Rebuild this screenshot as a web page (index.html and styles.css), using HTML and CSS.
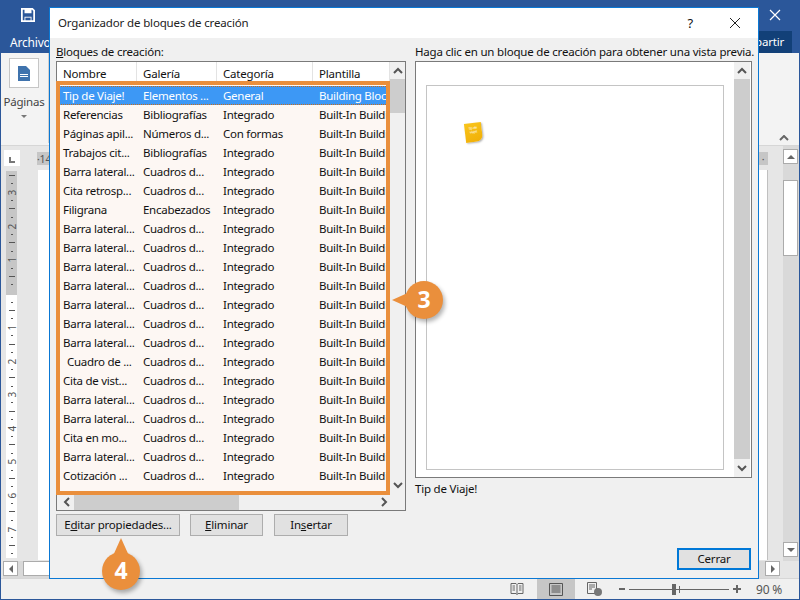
FILE: index.html
```html
<!DOCTYPE html>
<html lang="es">
<head>
    <meta charset="UTF-8">
    <title>Organizador de bloques de creación</title>
    <link rel="stylesheet" href="styles.css">
</head>
<body>
    <div class="word">
        <div class="titlebar">
            <svg class="save-icon" width="14" height="14" viewBox="0 0 16 16"><path d="M1 1h12l2 2v12H1z" fill="none" stroke="#fff" stroke-width="2"/><path d="M4 1h8v5H4zM4 10h8v5H4z" fill="#fff"/><path d="M5 11h6v3H5z" fill="#2b579a"/></svg>
            <svg class="word-close" width="12" height="12" viewBox="0 0 12 12"><path d="M1 1l10 10M11 1L1 11" stroke="#fff" stroke-width="1.2"/></svg>
        </div>
        <div class="tabs">
            <span class="tab-file">Archivo</span>
            <span class="tab-share">Compartir</span>
        </div>
        <div class="ribbon">
            <div class="pages-group">
                <div class="pages-btn">
                    <svg width="12" height="15" viewBox="0 0 12 15"><path d="M0 0h8l4 4v11H0z" fill="#3f73ad"/><path d="M2 8h8v1H2zM2 10h8v1H2z" fill="#fff"/></svg>
                </div>
                <span class="pages-label">Páginas</span>
                <span class="pages-arrow"></span>
            </div>
            <div class="ribbon-sep"></div>
            <svg class="ribbon-collapse" width="10" height="6" viewBox="0 0 10 6"><path d="M1 5l4-4 4 4" fill="none" stroke="#666" stroke-width="2"/></svg>
        </div>
        <div class="workspace">
            <div class="ruler-side">
                <div class="tab-corner"><span class="tab-l"></span></div>
                <div class="vruler">
                    <div class="vruler-gray">
                        <i class="dash"></i><i class="dot"></i><b>3</b><i class="dot"></i><i class="dash"></i><i class="dot"></i><b>2</b><i class="dot"></i><i class="dash"></i><i class="dot"></i><b>1</b><i class="dot"></i><i class="dash"></i><i class="dot"></i>
                    </div>
                    <div class="vruler-white">
                        <i class="dot"></i><i class="dash"></i><i class="dot"></i><b>1</b><i class="dot"></i><i class="dash"></i><i class="dot"></i><b>2</b><i class="dot"></i><i class="dash"></i><i class="dot"></i><b>3</b><i class="dot"></i><i class="dash"></i><i class="dot"></i><b>4</b><i class="dot"></i><i class="dash"></i><i class="dot"></i><b>5</b><i class="dot"></i><i class="dash"></i><i class="dot"></i><b>6</b><i class="dot"></i><i class="dash"></i><i class="dot"></i><b>7</b><i class="dot"></i><i class="dash"></i><i class="dot"></i>
                    </div>
                </div>
            </div>
            <div class="doc-area">
                <div class="hruler"><span class="hruler-num">·14</span><span class="hruler-end">·</span></div>
                <div class="page"></div>
            </div>
            <div class="vscroll-main">
                <span class="main-btn"><span class="tri-up"></span></span>
                <span class="main-thumb"></span>
                <span class="main-btn"><span class="tri-down"></span></span>
            </div>
        </div>
        <div class="hscroll-main">
            <span class="main-btn"><span class="tri-left"></span></span>
            <span class="main-hthumb"></span>
            <span class="main-btn"><span class="tri-right"></span></span>
        </div>
        <div class="statusbar">
            <svg class="view-icon" width="14" height="14" viewBox="0 0 14 14"><path d="M1 1.500h5l1 1 1-1h5v10H8l-1 1-1-1H1zM7 2.500v10M2.500 4H5M2.500 6H5M2.500 8H5M9 4h2.500M9 6h2.500M9 8h2.500" fill="none" stroke="#666"/></svg>
            <span class="view-active"><svg width="14" height="13" viewBox="0 0 14 13"><path d="M.5.5h13v12H.500zM2.500 3h9M2.500 5h9M2.500 7h9M2.500 9h9" fill="none" stroke="#555"/></svg></span>
            <svg class="view-icon web" width="16" height="14" viewBox="0 0 16 14"><path d="M.5.5h9v11h-9zM2 3h6M2 5h6M2 7h3" fill="none" stroke="#666"/><circle cx="11" cy="10" r="4" fill="#777"/></svg>
            <span class="zoom-minus"></span>
            <span class="zoom-track"><span class="zoom-mid"></span><span class="zoom-thumb"></span></span>
            <span class="zoom-plus"></span>
            <span class="zoom-text">90 %</span>
        </div>
    </div>

    <div class="dialog">
        <div class="dialog-title">
            <span class="dialog-name">Organizador de bloques de creación</span>
            <span class="dialog-help">?</span>
            <svg class="dialog-close" width="12" height="12" viewBox="0 0 12 12"><path d="M1 1l10 10M11 1L1 11" stroke="#222" stroke-width="1"/></svg>
        </div>
        <div class="dialog-body">
            <div class="panes">
                <div class="left-pane">
                    <div class="pane-label"><u>B</u>loques de creación:</div>
                    <div class="listbox">
                        <div class="list-main">
                            <div class="list-view">
                                <div class="list-head">
                                    <span>Nombre</span><span>Galería</span><span>Categoría</span><span>Plantilla</span>
                                </div>
                                <div class="list-rows">
                                    <div class="row selected"><span>Tip de Viaje!</span><span>Elementos ...</span><span>General</span><span>Building Blocks</span></div>
                                    <div class="row"><span>Referencias</span><span>Bibliografías</span><span>Integrado</span><span>Built-In Building</span></div>
                                    <div class="row"><span>Páginas apil...</span><span>Números d...</span><span>Con formas</span><span>Built-In Building</span></div>
                                    <div class="row"><span>Trabajos cit...</span><span>Bibliografías</span><span>Integrado</span><span>Built-In Building</span></div>
                                    <div class="row"><span>Barra lateral...</span><span>Cuadros d...</span><span>Integrado</span><span>Built-In Building</span></div>
                                    <div class="row"><span>Cita retrosp...</span><span>Cuadros d...</span><span>Integrado</span><span>Built-In Building</span></div>
                                    <div class="row"><span>Filigrana</span><span>Encabezados</span><span>Integrado</span><span>Built-In Building</span></div>
                                    <div class="row"><span>Barra lateral...</span><span>Cuadros d...</span><span>Integrado</span><span>Built-In Building</span></div>
                                    <div class="row"><span>Barra lateral...</span><span>Cuadros d...</span><span>Integrado</span><span>Built-In Building</span></div>
                                    <div class="row"><span>Barra lateral...</span><span>Cuadros d...</span><span>Integrado</span><span>Built-In Building</span></div>
                                    <div class="row"><span>Barra lateral...</span><span>Cuadros d...</span><span>Integrado</span><span>Built-In Building</span></div>
                                    <div class="row"><span>Barra lateral...</span><span>Cuadros d...</span><span>Integrado</span><span>Built-In Building</span></div>
                                    <div class="row"><span>Barra lateral...</span><span>Cuadros d...</span><span>Integrado</span><span>Built-In Building</span></div>
                                    <div class="row"><span>Barra lateral...</span><span>Cuadros d...</span><span>Integrado</span><span>Built-In Building</span></div>
                                    <div class="row"><span class="indented">Cuadro de ...</span><span>Cuadros d...</span><span>Integrado</span><span>Built-In Building</span></div>
                                    <div class="row"><span>Cita de vist...</span><span>Cuadros d...</span><span>Integrado</span><span>Built-In Building</span></div>
                                    <div class="row"><span>Barra lateral...</span><span>Cuadros d...</span><span>Integrado</span><span>Built-In Building</span></div>
                                    <div class="row"><span>Barra lateral...</span><span>Cuadros d...</span><span>Integrado</span><span>Built-In Building</span></div>
                                    <div class="row"><span>Cita en mo...</span><span>Cuadros d...</span><span>Integrado</span><span>Built-In Building</span></div>
                                    <div class="row"><span>Barra lateral...</span><span>Cuadros d...</span><span>Integrado</span><span>Built-In Building</span></div>
                                    <div class="row"><span>Cotización ...</span><span>Cuadros d...</span><span>Integrado</span><span>Built-In Building</span></div>
                                    <div class="row"><span>Citas en blo...</span><span>Cuadros d...</span><span>Integrado</span><span>Built-In Building</span></div>
                                </div>
                            </div>
                            <div class="scroll-v list-scroll">
                                <svg class="chev" width="10" height="7" viewBox="0 0 10 7"><path d="M1 6l4-4 4 4" fill="none" stroke="#555" stroke-width="2"/></svg>
                                <span class="thumb-v"></span>
                                <svg class="chev chev-end" width="10" height="7" viewBox="0 0 10 7"><path d="M1 1l4 4 4-4" fill="none" stroke="#555" stroke-width="2"/></svg>
                            </div>
                        </div>
                        <div class="scroll-h">
                            <svg width="7" height="10" viewBox="0 0 7 10"><path d="M6 1L2 5l4 4" fill="none" stroke="#555" stroke-width="2"/></svg>
                            <span class="thumb-h"></span>
                            <svg width="7" height="10" viewBox="0 0 7 10"><path d="M1 1l4 4-4 4" fill="none" stroke="#555" stroke-width="2"/></svg>
                        </div>
                        <div class="list-frame"></div>
                    </div>
                </div>
                <div class="right-pane">
                    <div class="pane-label">Haga clic en un bloque de creación para obtener una vista previa.</div>
                    <div class="preview">
                        <div class="preview-area">
                            <div class="preview-page">
                                <div class="note">tip de<br>viaje!</div>
                            </div>
                        </div>
                        <div class="scroll-v preview-scroll">
                            <svg class="chev" width="10" height="7" viewBox="0 0 10 7"><path d="M1 6l4-4 4 4" fill="none" stroke="#555" stroke-width="2"/></svg>
                            <span class="thumb-v"></span>
                            <svg class="chev chev-end" width="10" height="7" viewBox="0 0 10 7"><path d="M1 1l4 4 4-4" fill="none" stroke="#555" stroke-width="2"/></svg>
                        </div>
                    </div>
                    <div class="preview-name">Tip de Viaje!</div>
                </div>
            </div>
            <div class="actions">
                <button class="btn btn-edit">E<u>d</u>itar propiedades...</button>
                <button class="btn btn-delete"><u>E</u>liminar</button>
                <button class="btn btn-insert">In<u>s</u>ertar</button>
            </div>
            <div class="footer">
                <button class="btn btn-close">Cerrar</button>
            </div>
        </div>
    </div>

    <div class="callout callout-3">3</div>
    <div class="callout callout-4">4</div>
</body>
</html>
```

FILE: styles.css
```css
* {
    box-sizing: border-box;
}
html, body {
    margin: 0;
    height: 600px;
    overflow: hidden;
}
body {
    position: relative;
    width: 800px;
    font-family: "Noto Sans", "Open Sans", sans-serif;
    font-size: 11.5px;
    letter-spacing: -0.2px;
    color: #111;
    background: #f0f0f0;
}

/* word window behind the dialog */
.word {
    display: flex;
    flex-direction: column;
    width: 800px;
    height: 600px;
    border-left: 1px solid #2b579a;
    border-right: 1px solid #2b579a;
    border-bottom: 1px solid #2b579a;
}
.titlebar {
    display: flex;
    align-items: center;
    justify-content: space-between;
    height: 31px;
    padding: 0 18px 1px 20px;
    background: #2b579a;
}
.tabs {
    display: flex;
    align-items: center;
    justify-content: space-between;
    height: 22px;
    background: #2b579a;
    color: #fff;
}
.tab-file {
    margin-left: 9px;
    font-size: 12px;
}
.tab-share {
    width: 68px;
    height: 22px;
    line-height: 22px;
    margin-right: 7px;
    padding-right: 8px;
    text-align: right;
    background: #124078;
}
.ribbon {
    display: flex;
    height: 93px;
    background: #f3f3f3;
    border-bottom: 1px solid #d6d6d6;
}
.pages-group {
    display: flex;
    flex-direction: column;
    align-items: center;
    width: 46px;
    margin-right: 1px;
    padding-top: 5px;
}
.pages-btn {
    display: flex;
    align-items: center;
    justify-content: center;
    flex: none;
    width: 30px;
    height: 30px;
    background: #fff;
    border: 1px solid #c6c6c6;
}
.pages-label {
    margin-top: 6px;
    color: #444;
}
.pages-arrow {
    margin-top: 6px;
    border-left: 3px solid transparent;
    border-right: 3px solid transparent;
    border-top: 3px solid #777;
}
.ribbon-sep {
    width: 1px;
    height: 90px;
    background: #d0d0d0;
}
.ribbon-collapse {
    flex: none;
    margin: 82px 10px 0 auto;
}
.workspace {
    display: flex;
    flex: 1;
    background: #e6e6e6;
}
.ruler-side {
    width: 36px;
    padding: 4px 0 0 3px;
}
.tab-corner {
    display: flex;
    align-items: flex-end;
    justify-content: center;
    width: 16px;
    height: 16px;
    padding-bottom: 3px;
    background: #fff;
}
.tab-l {
    width: 6px;
    height: 6px;
    border-left: 2px solid #777;
    border-bottom: 2px solid #777;
}
.vruler {
    margin-top: 5px;
    width: 11px;
    margin-left: 2px;
}
.vruler-gray,
.vruler-white {
    display: flex;
    flex-direction: column;
    align-items: center;
    color: #555;
}
.vruler-gray {
    height: 124px;
    background: #c6c6c6;
}
.vruler-white {
    height: 263px;
    padding-top: 3px;
    background: #fff;
}
.vruler i,
.vruler b {
    display: flex;
    align-items: center;
    justify-content: center;
    height: 8.45px;
    font-weight: 400;
    font-size: 10px;
    font-style: normal;
}
.vruler b {
    writing-mode: vertical-rl;
    transform: rotate(180deg);
}
.dash::before {
    content: "";
    width: 6px;
    height: 1px;
    background: #555;
}
.dot::before {
    content: "";
    width: 2px;
    height: 1px;
    background: #555;
}
.doc-area {
    flex: 1;
    display: flex;
    flex-direction: column;
}
.hruler {
    display: flex;
    justify-content: space-between;
    height: 24px;
    padding: 6px 2px 0 0;
    font-size: 10.5px;
    line-height: 14px;
    color: #555;
}
.hruler-num {
    width: 12px;
    height: 13px;
    background: #c6c6c6;
    white-space: nowrap;
    overflow: hidden;
}
.hruler-end {
    width: 10px;
    height: 13px;
    background: #c6c6c6;
    text-align: center;
}
.page {
    width: 730px;
    height: 390px;
    margin-left: 1px;
    background: #fff;
    border-right: 1px solid #c0c0c0;
}
.vscroll-main {
    display: flex;
    flex-direction: column;
    width: 29px;
    padding: 3px 1px 4px 13px;
    background: linear-gradient(to right, #e6e6e6 13px, #d9d9d9 13px);
}
.main-btn {
    display: flex;
    align-items: center;
    justify-content: center;
    flex: none;
    width: 15px;
    height: 15px;
    background: #fff;
    border: 1px solid #ababab;
}
.main-thumb {
    flex: none;
    height: 76px;
    margin-top: 16px;
    margin-bottom: auto;
    background: #fff;
    border: 1px solid #ababab;
}
.tri-up, .tri-down {
    border-left: 4px solid transparent;
    border-right: 4px solid transparent;
}
.tri-up {
    border-bottom: 4px solid #666;
}
.tri-down {
    border-top: 4px solid #666;
}
.tri-left, .tri-right {
    border-top: 4px solid transparent;
    border-bottom: 4px solid transparent;
}
.tri-left {
    border-right: 4px solid #666;
}
.tri-right {
    border-left: 4px solid #666;
}
.hscroll-main {
    display: flex;
    align-items: flex-start;
    height: 17px;
    padding: 0 19px 0 2px;
    background: linear-gradient(to right, #e6e6e6 2px, #d9d9d9 2px, #d9d9d9 778px, #e6e6e6 778px);
    gap: 5px;
}
.main-hthumb {
    width: 30px;
    height: 15px;
    margin-right: auto;
    background: #fff;
    border: 1px solid #ababab;
}
.statusbar {
    display: flex;
    align-items: center;
    height: 21px;
    padding-left: 509px;
    background: #f0f0f0;
    border-top: 1px solid #d6d6d6;
    color: #555;
}
.view-active {
    display: flex;
    align-items: center;
    justify-content: center;
    width: 38px;
    height: 20px;
    margin-left: 13px;
    background: #c6c6c6;
}
.view-icon.web {
    margin-left: 12px;
}
.zoom-minus {
    width: 6px;
    height: 2px;
    margin-left: 16px;
    background: #666;
}
.zoom-track {
    display: block;
    position: relative;
    width: 100px;
    height: 1px;
    margin-left: 4px;
    background: #666;
}
.zoom-thumb {
    position: absolute;
    left: 43px;
    top: -5px;
    width: 4px;
    height: 11px;
    background: #666;
}
.zoom-mid {
    position: absolute;
    left: 50px;
    top: -3px;
    width: 1px;
    height: 7px;
    background: #666;
}
.zoom-plus {
    position: relative;
    width: 8px;
    height: 2px;
    margin-left: 4px;
    background: #666;
}
.zoom-plus::after {
    content: "";
    position: absolute;
    left: 3px;
    top: -3px;
    width: 2px;
    height: 8px;
    background: #666;
}
.zoom-text {
    margin-left: 15px;
    font-size: 12px;
}

/* dialog */
.dialog {
    position: absolute;
    left: 49px;
    top: 7px;
    width: 710px;
    height: 572px;
    display: flex;
    flex-direction: column;
    background: #f0f0f0;
    border: 1px solid #0a78d4;
}
.dialog-title {
    display: flex;
    align-items: center;
    flex: none;
    height: 30px;
    padding: 0 0 1px 8px;
    background: #fff;
    letter-spacing: -0.15px;
}
.dialog-name {
    flex: 1;
    color: #222;
}
.dialog-help {
    margin-right: 36px;
    font-size: 13px;
}
.dialog-close {
    margin-right: 17px;
}
.dialog-body {
    flex: 1;
    display: flex;
    flex-direction: column;
    padding: 6px 6px 8px 6px;
}
.panes {
    display: flex;
    gap: 9px;
}
.pane-label {
    height: 17px;
    line-height: 15px;
    white-space: nowrap;
}
.left-pane {
    width: 350px;
}
.right-pane {
    width: 337px;
}
.listbox {
    position: relative;
    height: 450px;
    display: flex;
    flex-direction: column;
    background: #fff;
    border: 1px solid #7a7a7a;
}
.list-main {
    display: flex;
    flex: 1;
    min-height: 0;
}
.list-view {
    width: 333px;
    overflow: hidden;
}
.list-head,
.row {
    display: grid;
    grid-template-columns: 80px 80px 96px 77px;
    white-space: nowrap;
}
.list-head {
    height: 20px;
    line-height: 23px;
    background: #fff;
}
.list-head span {
    padding-left: 6px;
    border-right: 1px solid #e3e3e3;
    overflow: hidden;
}
.list-rows {
    height: 412px;
    padding-top: 4px;
    overflow: hidden;
    background: #fdf7f3;
}
.row {
    height: 19px;
    line-height: 19px;
    letter-spacing: -0.27px;
}
.row span {
    padding-left: 6px;
    overflow: hidden;
}
.row .indented {
    padding-left: 10px;
}
.row.selected {
    background: #3d98f5;
    color: #fff;
    outline: 1px dotted #c96c1a;
    outline-offset: -1px;
}
.list-frame {
    position: absolute;
    left: -1px;
    top: 19px;
    width: 334px;
    height: 414px;
    border: 4px solid #ea8f3c;
}
.scroll-v {
    display: flex;
    flex-direction: column;
    align-items: center;
    background: #f0f0f0;
}
.scroll-v .chev {
    flex: none;
    margin: 5px 0;
}
.scroll-v .chev-end {
    margin-top: auto;
}
.list-scroll {
    width: 15px;
}
.thumb-v {
    display: block;
    width: 100%;
}
.list-scroll .thumb-v {
    height: 34px;
    background: #cdcdcd;
}
.scroll-h {
    display: flex;
    align-items: center;
    flex: none;
    height: 16px;
    padding: 0 17px 0 6px;
    background: #f0f0f0;
}
.thumb-h {
    width: 165px;
    height: 16px;
    margin-left: 4px;
    margin-right: auto;
    background: #cdcdcd;
}
.preview {
    display: flex;
    height: 417px;
    background: #fff;
    border: 1px solid #7a7a7a;
    padding-right: 1px;
}
.preview-area {
    flex: 1;
    padding: 23px 10px 8px 10px;
}
.preview-page {
    height: 385px;
    padding: 37px 0 0 38px;
    border: 1px solid #c4c4c4;
}
.note {
    width: 17px;
    height: 19px;
    padding-top: 3px;
    background: linear-gradient(160deg, #f9c51c, #f0ae06);
    border-bottom-right-radius: 6px;
    color: #fff;
    font-size: 3.5px;
    line-height: 4px;
    text-align: center;
    transform: rotate(-7deg);
    box-shadow: 1px 1px 2px rgba(0,0,0,0.3);
}
.preview-scroll {
    width: 16px;
    background: #f0f0f0;
}
.preview-scroll .thumb-v {
    height: 380px;
    background: #cdcdcd;
}
.preview-name {
    margin-top: 3px;
}
.actions {
    display: flex;
    margin-top: 3px;
}
.btn {
    height: 22px;
    padding: 0 0 2px;
    background: #e1e1e1;
    border: 1px solid #adadad;
    font-family: inherit;
    font-size: 11.5px;
    letter-spacing: inherit;
    color: #111;
}
.btn-edit {
    width: 124px;
}
.btn-delete {
    width: 73px;
    margin-left: 10px;
}
.btn-insert {
    width: 74px;
    margin-left: 11px;
}
.footer {
    display: flex;
    justify-content: flex-end;
    margin-top: auto;
    padding-right: 1px;
}
.btn-close {
    width: 74px;
    border: 2px solid #0078d7;
}

/* numbered callouts */
.callout {
    position: absolute;
    width: 38px;
    height: 38px;
    border-radius: 50%;
    background: #ea8f3c;
    color: #fff;
    font-family: "Open Sans", sans-serif;
    font-size: 23px;
    font-weight: 700;
    letter-spacing: 0;
    line-height: 37px;
    text-align: center;
    box-shadow: 2px 3px 4px rgba(0,0,0,0.3);
}
.callout::before {
    content: "";
    position: absolute;
}
.callout-3 {
    left: 405px;
    top: 281px;
}
.callout-3::before {
    left: -13px;
    top: 10px;
    border-top: 9px solid transparent;
    border-bottom: 9px solid transparent;
    border-right: 20px solid #ea8f3c;
}
.callout-4 {
    left: 102px;
    top: 552px;
}
.callout-4::before {
    left: 10px;
    top: -14px;
    border-left: 9px solid transparent;
    border-right: 9px solid transparent;
    border-bottom: 20px solid #ea8f3c;
}
```
